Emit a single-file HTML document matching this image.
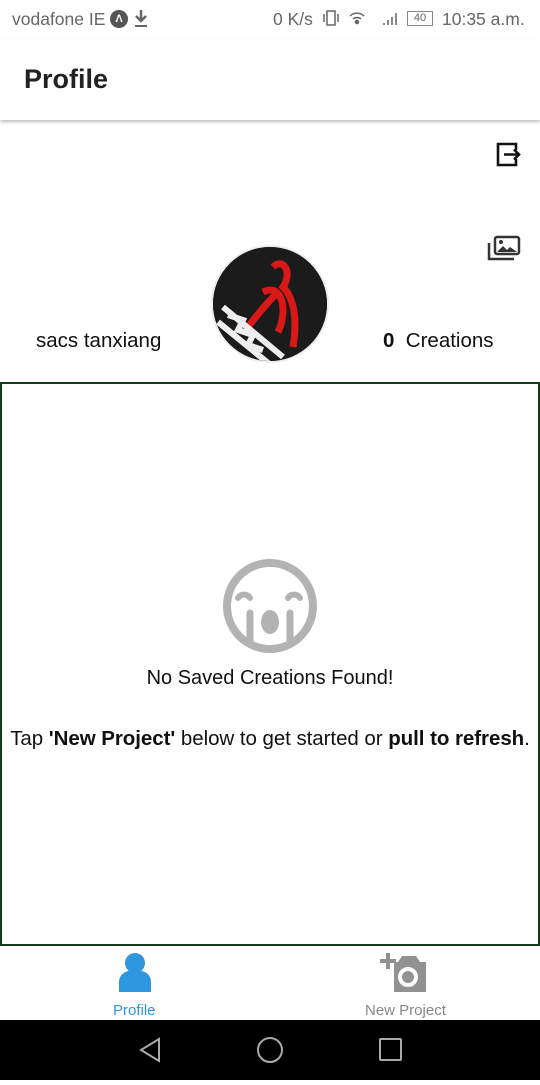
<!DOCTYPE html>
<html><head><meta charset="utf-8"><style>
*{margin:0;padding:0;box-sizing:border-box}
body{width:540px;height:1080px;position:relative;background:#fff;font-family:"Liberation Sans",Roboto,sans-serif;overflow:hidden}
.a{position:absolute}
</style></head><body>
<div class="a" style="top:0;left:0;width:540px;height:40px;color:#666;font-size:17.5px">
<span class="a" style="left:12px;top:9px">vodafone IE</span>
<div class="a" style="left:110px;top:10px;width:18px;height:18px;border-radius:50%;background:#555;color:#fff;font-size:11px;text-align:center;line-height:18px;font-weight:bold">&#923;</div>
<svg class="a" style="left:133px;top:9px" width="16" height="20"><path d="M8 1v11M3 7l5 5 5-5" stroke="#666" stroke-width="2.5" fill="none"/><rect x="2" y="16" width="12" height="2" fill="#666"/></svg>
<span class="a" style="left:273px;top:9px">0 K/s</span>
<svg class="a" style="left:322px;top:9px" width="100" height="20" fill="none" stroke="#666" stroke-width="1.5"><rect x="5" y="2" width="8" height="14"/><path d="M2 5v8M16 5v8"/><path d="M28 7a10 10 0 0 1 14 0M31 10a6 6 0 0 1 8 0" /><circle cx="35" cy="13" r="1.5" fill="#666"/><path d="M62 16v-2M66 16v-5M70 16v-8M74 16v-12" stroke="#888" stroke-width="2"/></svg>
<div class="a" style="left:407px;top:11px;width:26px;height:15px;border:1.5px solid #888;font-size:11px;text-align:center;line-height:12px">40</div>
<span class="a" style="left:442px;top:9px">10:35 a.m.</span>
</div>
<div class="a" style="top:40px;left:0;width:540px;height:80px;background:#fff;box-shadow:0 2px 3px rgba(0,0,0,.25)"><span class="a" style="left:24px;top:24px;font-size:27px;font-weight:bold;color:#222">Profile</span></div>
<svg class="a" style="left:496px;top:142px" width="26" height="26" fill="none" stroke="#111" stroke-width="2.6"><path d="M20 8V2H2v21h18v-6"/><path d="M8 12.5h15M18 7.5l5 5-5 5"/></svg>
<svg class="a" style="left:486px;top:234px" width="36" height="30" fill="none" stroke="#333" stroke-width="2.5"><rect x="9" y="3" width="24" height="17" rx="2"/><path d="M3 9v16h25"/><path d="M11 18l6-6 4 4 3-3 7 5z" fill="#333" stroke="none"/><circle cx="15" cy="8" r="2" fill="#333" stroke="none"/></svg>
<span class="a" style="left:36px;top:329px;font-size:20.5px;color:#111">sacs tanxiang</span>
<span class="a" style="left:383px;top:329px;font-size:20.5px;color:#111"><b>0</b>&nbsp; Creations</span>
<div class="a" style="left:211px;top:245px;width:118px;height:118px;border-radius:50%;border:2px solid #eee;overflow:hidden;background:#222">
<svg width="118" height="118"><rect width="118" height="118" fill="#1b1b1b"/><path d="M60 20c10-10 20 5 10 20 10 10 15 30 10 60M50 45c20-10 25 20 15 40M35 80c15-20 25-30 30-35" stroke="#d91818" stroke-width="7" fill="none"/><path d="M10 60l60 50M5 75l55 45M15 68l15 5-5 10 15 5-5 10 15 5" stroke="#eee" stroke-width="6" fill="none"/></svg></div>
<div class="a" style="left:0;top:382px;width:540px;height:564px;border:2px solid #163a16"></div>
<svg class="a" style="left:220px;top:556px" width="100" height="100" fill="none" stroke="#b3b3b3" stroke-width="8" stroke-linecap="round"><circle cx="50" cy="50" r="43"/><path d="M18 42a7 7 0 0 1 12 0M68 42a7 7 0 0 1 12 0" stroke-width="6"/><path d="M30 57v28M70 57v28" stroke-width="7"/><ellipse cx="50" cy="66" rx="9" ry="12" fill="#b3b3b3" stroke="none"/></svg>
<div class="a" style="left:0;top:667px;width:540px;text-align:center;font-size:20px;color:#111">No Saved Creations Found!</div>
<div class="a" style="left:-20px;top:727px;width:580px;text-align:center;font-size:20.5px;color:#111;letter-spacing:-0.05px">Tap <b>'New Project'</b> below to get started or <b>pull to refresh</b>.</div>
<svg class="a" style="left:117px;top:952px" width="36" height="42" fill="#2f96e0"><circle cx="18" cy="11" r="10"/><path d="M2 40v-10c0-8 7-12 16-12s16 4 16 12v10z"/></svg>
<span class="a" style="left:113px;top:1002px;font-size:15px;color:#2f96e0">Profile</span>
<svg class="a" style="left:380px;top:950px" width="48" height="44"><path d="M8 3v16M0 11h16" stroke="#919191" stroke-width="4"/><path d="M14 12h4l4-6h14l4 6h6v30H14z" fill="#919191"/><circle cx="28" cy="27" r="8" fill="none" stroke="#fff" stroke-width="4"/></svg>
<span class="a" style="left:365px;top:1002px;font-size:15px;color:#888">New Project</span>
<div class="a" style="left:0;top:1020px;width:540px;height:60px;background:#000">
<svg width="540" height="60" fill="none" stroke="#aaa" stroke-width="2"><path d="M159 19L141 30 159 41z"/><circle cx="270" cy="30" r="12"/><rect x="380" y="19" width="21" height="21" rx="1"/></svg></div>
</body></html>
